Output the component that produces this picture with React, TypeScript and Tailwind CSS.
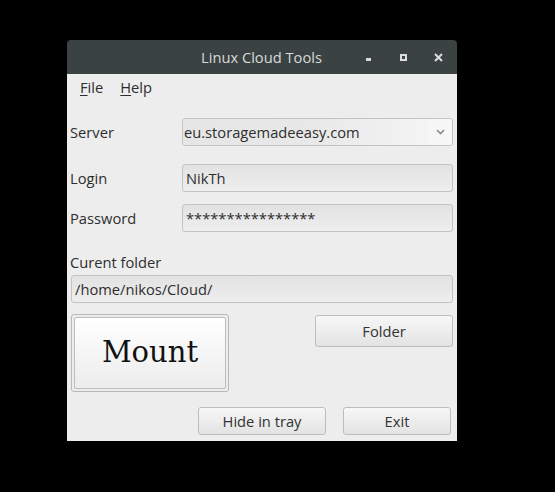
import React from "react";

const font = { fontFamily: '"Open Sans", "Noto Sans", sans-serif' };

function Field({ value, className = "" }: { value: string; className?: string }) {
  return (
    <div
      className={`h-[28px] flex items-center px-[3px] rounded-[3px] border border-[#c3c3c3] bg-gradient-to-b from-[#e2e2e2] to-[#eeeeee] text-[14.7px] text-[#2e2e2e] ${className}`}
    >
      {value}
    </div>
  );
}

function Btn({ label, className = "" }: { label: string; className?: string }) {
  return (
    <div
      className={`flex items-center justify-center rounded-[3px] border border-[#bdbdbd] bg-gradient-to-b from-[#f7f7f7] to-[#e3e3e3] text-[14.7px] text-[#333] ${className}`}
    >
      {label}
    </div>
  );
}

export default function App() {
  return (
    <div className="w-[555px] h-[492px] bg-black pl-[67px] pt-[40px]" style={font}>
      <div className="w-[390px] h-[401px] flex flex-col">
        {/* title bar */}
        <div className="h-[34px] rounded-t-[4px] bg-[#3b4242] flex items-center relative">
          <div className="flex-1 text-center text-[14.7px] text-[#d8dada] pr-[1px]">Linux Cloud Tools</div>
          <div className="absolute right-0 top-0 h-full flex items-center">
            <div className="w-[35px] flex justify-center">
              <div className="w-[5px] h-[3px] bg-[#dcdcdc] mt-[5px]" />
            </div>
            <div className="w-[35px] flex justify-center">
              <div className="w-[7px] h-[7px] border-2 border-[#dcdcdc]" />
            </div>
            <div className="w-[36px] flex justify-center pr-[2px]">
              <svg width="9" height="9" viewBox="0 0 9 9">
                <path d="M1 1 L8 8 M8 1 L1 8" stroke="#dcdcdc" strokeWidth="2" />
              </svg>
            </div>
          </div>
        </div>
        {/* body */}
        <div className="flex-1 bg-[#ededed] flex flex-col px-[4px]">
          <div className="h-[27px] flex items-center gap-[17px] pl-[9px] text-[14.7px] text-[#2e2e2e]">
            <span>
              <span className="underline underline-offset-2">F</span>ile
            </span>
            <span>
              <span className="underline underline-offset-2">H</span>elp
            </span>
          </div>
          <div className="mt-[17px] flex items-center">
            <div className="w-[111px] text-[14.7px] text-[#2e2e2e] -ml-[1px] pl-0">Server</div>
            <div className="flex-1 h-[28px] flex rounded-[3px] border border-[#c3c3c3] overflow-hidden ml-[1px]">
              <div className="flex-1 flex items-center px-[1px] text-[14.7px] text-[#2e2e2e] bg-gradient-to-r from-[#e6e6e6] via-[#e8e8e8] to-[#f4f4f4]">
                eu.storagemadeeasy.com
              </div>
              <div className="w-[24px] bg-[#f7f7f7] flex items-center justify-center">
                <svg width="9" height="6" viewBox="0 0 9 6">
                  <path d="M1 1 L4.5 4.5 L8 1" stroke="#8a8a8a" strokeWidth="1.6" fill="none" />
                </svg>
              </div>
            </div>
          </div>
          <div className="mt-[18px] flex items-center">
            <div className="w-[111px] text-[14.7px] text-[#2e2e2e] -ml-[1px]">Login</div>
            <Field value="NikTh" className="flex-1 ml-[1px]" />
          </div>
          <div className="mt-[12px] flex items-center">
            <div className="w-[111px] text-[14.7px] text-[#2e2e2e] -ml-[1px]">Password</div>
            <Field value="****************" className="flex-1 ml-[1px]" />
          </div>
          <div className="mt-[20px] text-[14.7px] text-[#2e2e2e] leading-[20px] -ml-[1px]">Curent folder</div>
          <Field value="/home/nikos/Cloud/" className="mt-[3px]" />
          <div className="mt-[11px] flex justify-between items-start">
            <div className="w-[158px] h-[78px] rounded-[3px] border border-[#b8b8b8] p-[2px]">
              <div
                className="w-full h-full rounded-[2px] border border-[#bdbdbd] bg-gradient-to-b from-white to-[#ececec] flex items-center justify-center text-[29px] text-[#111]"
                style={{ fontFamily: '"DejaVu Serif", serif' }}
              >
                Mount
              </div>
            </div>
            <Btn label="Folder" className="w-[138px] h-[32px] mt-[1px]" />
          </div>
          <div className="mt-[15px] flex justify-end pr-[2px]">
            <Btn label="Hide in tray" className="w-[128px] h-[28px]" />
            <Btn label="Exit" className="w-[108px] h-[28px] ml-[17px]" />
          </div>
        </div>
      </div>
    </div>
  );
}
